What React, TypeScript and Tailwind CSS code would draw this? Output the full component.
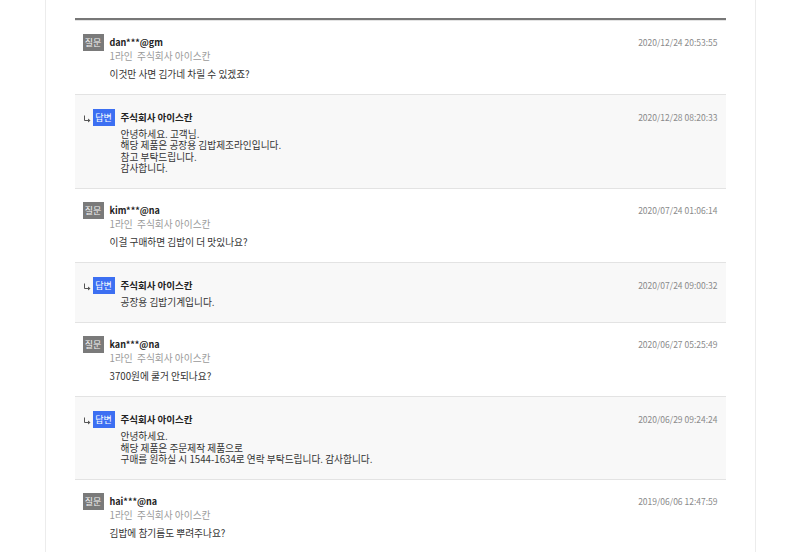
/**
 * 상품 Q&A 목록 - 질문/답변 스레드
 */

interface QnaItem {
  type: "q" | "a";
  author: string;
  date: string;
  lines: string[];
}

const items: QnaItem[] = [
  {
    type: "q",
    author: "dan***@gm",
    date: "2020/12/24 20:53:55",
    lines: ["이것만 사면 김가네 차릴 수 있겠죠?"],
  },
  {
    type: "a",
    author: "주식회사 아이스칸",
    date: "2020/12/28 08:20:33",
    lines: [
      "안녕하세요. 고객님.",
      "해당 제품은 공장용 김밥제조라인입니다.",
      "참고 부탁드립니다.",
      "감사합니다.",
    ],
  },
  {
    type: "q",
    author: "kim***@na",
    date: "2020/07/24 01:06:14",
    lines: ["이걸 구매하면 김밥이 더 맛있나요?"],
  },
  {
    type: "a",
    author: "주식회사 아이스칸",
    date: "2020/07/24 09:00:32",
    lines: ["공장용 김밥기계입니다."],
  },
  {
    type: "q",
    author: "kan***@na",
    date: "2020/06/27 05:25:49",
    lines: ["3700원에 쿨거 안되나요?"],
  },
  {
    type: "a",
    author: "주식회사 아이스칸",
    date: "2020/06/29 09:24:24",
    lines: [
      "안녕하세요.",
      "해당 제품은 주문제작 제품으로",
      "구매를 원하실 시 1544-1634로 연락 부탁드립니다. 감사합니다.",
    ],
  },
  {
    type: "q",
    author: "hai***@na",
    date: "2019/06/06 12:47:59",
    lines: ["김밥에 참기름도 뿌려주나요?"],
  },
];

function Question({ item }: { item: QnaItem }) {
  return (
    <li className="border-t border-[#e3e3e3] bg-white pl-[8px] pr-[8px] pt-[13px] pb-[14px]">
      <div className="flex items-start justify-between">
        <div className="flex items-start">
          <span className="flex h-[17px] w-[21px] items-center justify-center bg-[#7a7a7a] text-[9px] text-[#f2f2f2]">
            질문
          </span>
          <div className="ml-[6px]">
            <p className="h-[17px] leading-[17px] text-[9px] font-bold text-[#222]">
              {item.author}
            </p>
            <p className="h-[11px] leading-[11px] text-[9.7px] text-[#9a9a9a]">
              1라인&nbsp;&nbsp;주식회사 아이스칸
            </p>
          </div>
        </div>
        <span className="leading-[17px] text-[8.5px] text-[#8a8a8a]">{item.date}</span>
      </div>
      <div className="mt-[6px] pl-[27px] text-[9.7px] leading-[12px] text-[#333]">
        {item.lines.map((line) => (
          <p key={line}>{line}</p>
        ))}
      </div>
    </li>
  );
}

function Answer({ item }: { item: QnaItem }) {
  return (
    <li className="border-t border-[#e3e3e3] bg-[#f8f8f8] pl-[8px] pr-[8px] pt-[14px] pb-[14px]">
      <div className="flex items-start justify-between">
        <div className="flex items-center">
          <svg width="10" height="17" viewBox="0 0 10 17" className="shrink-0">
            <path d="M1.5 6.5 V11.5 H6" fill="none" stroke="#555" strokeWidth="1" />
            <path d="M5 9.5 L7.5 11.5 L5 13.5 Z" fill="#555" />
          </svg>
          <span className="flex h-[17px] w-[22px] items-center justify-center bg-[#3c6ff2] text-[9px] text-white">
            답변
          </span>
          <p className="ml-[6px] h-[17px] leading-[17px] text-[9.5px] font-bold text-[#222]">
            {item.author}
          </p>
        </div>
        <span className="leading-[17px] text-[8.5px] text-[#8a8a8a]">{item.date}</span>
      </div>
      <div className="mt-[3px] pl-[38px] text-[9.7px] leading-[11.3px] text-[#333]">
        {item.lines.map((line) => (
          <p key={line}>{line}</p>
        ))}
      </div>
    </li>
  );
}

export default function App() {
  return (
    <div
      className="min-h-screen bg-white"
      style={{ fontFamily: '"Noto Sans CJK KR", "Noto Sans", sans-serif' }}
    >
      <div className="mx-auto min-h-[552px] w-[711px] border-x border-[#ececec] px-[29px] pt-[18px]">
        <ul className="border-t-2 border-[#777]">
          {items.map((item, i) =>
            item.type === "q" ? (
              <Question key={i} item={item} />
            ) : (
              <Answer key={i} item={item} />
            )
          )}
        </ul>
      </div>
    </div>
  );
}
